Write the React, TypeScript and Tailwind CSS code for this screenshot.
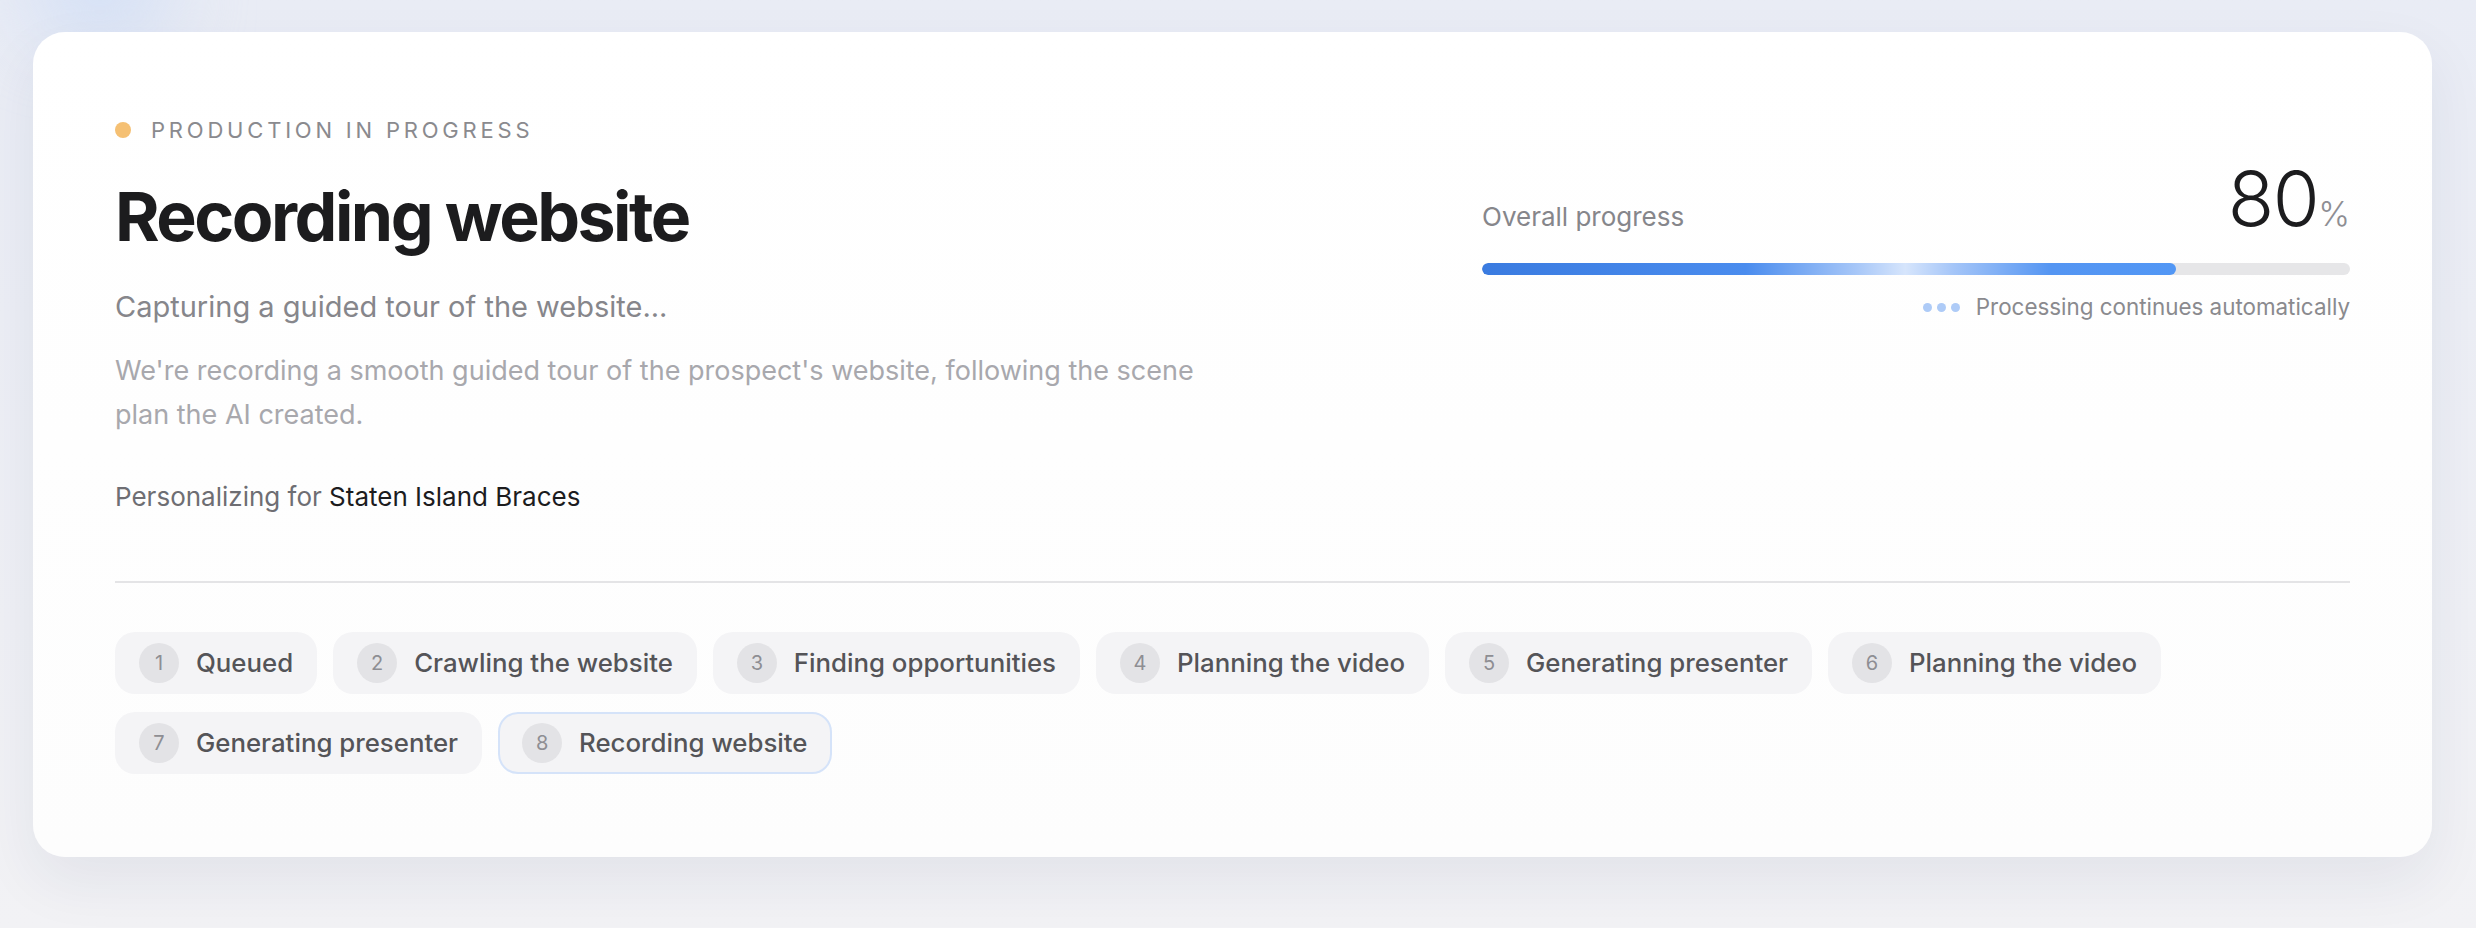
import React from 'react';

const steps = [
  'Queued',
  'Crawling the website',
  'Finding opportunities',
  'Planning the video',
  'Generating presenter',
  'Planning the video',
  'Generating presenter',
  'Recording website',
];

const currentStep = 8;
const progress = 80;

const StepChip: React.FC<{ n: number; label: string; active: boolean }> = ({ n, label, active }) => (
  <div
    className={`flex items-center h-[62px] rounded-[20px] bg-[#f4f4f6] ${
      active ? 'border-2 border-[#d5e3f9] pl-[22px] pr-[22px]' : 'pl-[24px] pr-[24px]'
    }`}
  >
    <span className="w-[40px] h-[40px] rounded-full bg-[#e3e3e6] flex items-center justify-center text-[20px] text-[#8e8e93]">
      {n}
    </span>
    <span className="ml-[17px] text-[25.8px] text-[#545458] font-medium">{label}</span>
  </div>
);

export default function App() {
  return (
    <div
      className="w-full h-[928px] overflow-hidden bg-gradient-to-b from-[#e9ecf5] to-[#f2f2f5] relative pl-[33px] pr-[44px] pt-[32px]"
      style={{ fontFamily: 'Inter, "Noto Sans", sans-serif' }}
    >
      {/* faint blue blob top-left */}
      <div className="absolute -top-[40px] left-[30px] w-[140px] h-[70px] rounded-full bg-[#cddcf6] blur-2xl" />

      <div className="relative rounded-[32px] bg-gradient-to-b from-white to-[#fdfdfd] shadow-[0_24px_60px_rgba(30,40,80,0.07)] px-[82px] pt-[82px] pb-[83px]">
        <div className="flex justify-between">
          {/* left column */}
          <div className="flex flex-col">
            <div className="flex items-center h-[32px]">
              <span className="w-[16px] h-[16px] rounded-full bg-[#f5c073]" />
              <span className="ml-[20px] text-[22px] tracking-[3.8px] text-[#8a8a8e] uppercase">Production in progress</span>
            </div>
            <h1 className="mt-[30px] text-[68px] leading-[80px] font-bold tracking-[-2.5px] text-[#1c1c1e]">
              Recording website
            </h1>
            <p className="mt-[31px] text-[29px] leading-[40px] text-[#86868b]">Capturing a guided tour of the website...</p>
            <p className="mt-[22px] max-w-[1110px] text-[27px] leading-[44px] text-[#a8a8ad]">
              We're recording a smooth guided tour of the prospect's website, following the scene plan the AI created.
            </p>
            <p className="mt-[42px] text-[26px] leading-[36px] text-[#6e6e73]">
              Personalizing for <span className="text-[#1c1c1e]">Staten Island Braces</span>
            </p>
          </div>

          {/* right column */}
          <div className="w-[868px] flex flex-col pt-[46px]">
            <div className="flex items-end justify-between">
              <span className="text-[26px] leading-[36px] text-[#86868b] mb-[4px]">Overall progress</span>
              <span className="flex items-baseline">
                <span className="text-[76px] leading-[76px] font-light text-[#1c1c1e] tracking-[-1.5px]">{progress}</span>
                <span className="text-[34px] font-light text-[#8e8e93]">%</span>
              </span>
            </div>
            <div className="mt-[24px] h-[12px] rounded-full bg-[#e6e6e8] overflow-hidden">
              <div
                className="h-full rounded-full"
                style={{
                  width: `${progress}%`,
                  background:
                    'linear-gradient(90deg, #3a7be0 0%, #4a8cee 38%, #a7c7f8 54%, #d6e5fc 61%, #a4c5f8 68%, #5495f2 82%, #5297f5 100%)',
                }}
              />
            </div>
            <div className="mt-[16px] flex items-center justify-end">
              <span className="flex gap-[5px] mr-[16px]">
                <span className="w-[9px] h-[9px] rounded-full bg-[#aecbf7]" />
                <span className="w-[9px] h-[9px] rounded-full bg-[#aecbf7]" />
                <span className="w-[9px] h-[9px] rounded-full bg-[#aecbf7]" />
              </span>
              <span className="text-[22.4px] leading-[32px] text-[#8a8a8e]">Processing continues automatically</span>
            </div>
          </div>
        </div>

        <div className="mt-[66px] h-[2px] bg-[#e4e4e6]" />

        <div className="mt-[49px] flex flex-wrap gap-x-[16px] gap-y-[18px]">
          {steps.map((s, i) => (
            <StepChip key={i} n={i + 1} label={s} active={i + 1 === currentStep} />
          ))}
        </div>
      </div>
    </div>
  );
}
